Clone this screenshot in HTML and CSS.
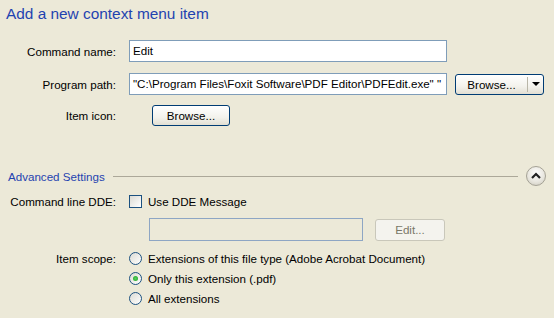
FILE: index.html
```html
<!DOCTYPE html>
<html lang="en">
<head>
  <meta charset="UTF-8">
  <title>Add a new context menu item</title>
  <link rel="stylesheet" href="styles.css">
</head>
<body>
  <h1 class="title">Add a new context menu item</h1>

  <div class="row row--name">
    <label class="label">Command name:</label>
    <div class="field field--wide">Edit</div>
  </div>

  <div class="row row--path">
    <label class="label">Program path:</label>
    <div class="field field--wide">"C:\Program Files\Foxit Software\PDF Editor\PDFEdit.exe" "</div>
    <button class="btn btn--split">
      <span class="btn__main">Browse...</span>
      <span class="btn__arrow"></span>
    </button>
  </div>

  <div class="row row--icon">
    <label class="label">Item icon:</label>
    <button class="btn btn--icon">Browse...</button>
  </div>

  <div class="section">
    <span class="section__title">Advanced Settings</span>
    <span class="section__line"></span>
    <span class="collapse">
      <svg width="10" height="8" viewBox="0 0 10 8"><path d="M1 6 L5 2 L9 6" fill="none" stroke="#222" stroke-width="2.2"/></svg>
    </span>
  </div>

  <div class="row row--dde">
    <label class="label">Command line DDE:</label>
    <span class="check"></span>
    <span class="opt">Use DDE Message</span>
  </div>

  <div class="row row--ddemsg">
    <div class="field field--off"></div>
    <button class="btn btn--off">Edit...</button>
  </div>

  <div class="row row--scope">
    <label class="label">Item scope:</label>
    <span class="radio"></span>
    <span class="opt">Extensions of this file type (Adobe Acrobat Document)</span>
  </div>
  <div class="row row--radio">
    <span class="radio radio--on"></span>
    <span class="opt">Only this extension (.pdf)</span>
  </div>
  <div class="row row--radio">
    <span class="radio"></span>
    <span class="opt">All extensions</span>
  </div>
</body>
</html>
```

FILE: styles.css
```css
* { padding:0; margin:0; box-sizing:border-box; }

:root {
  --color-bg: #ece9d8;
  --color-text: #000000;
  --color-blue: #1f43b0;
  --color-field: #7f9db9;
  --color-btn: #003c74;
  --label-width: 116px;
  --label-gap: 13px;
}

body {
  width: 554px;
  height: 318px;
  overflow: hidden;
  background-color: var(--color-bg);
  color: var(--color-text);
  font-family: "Liberation Sans", Arial, sans-serif;
  font-size: 11.6px;
}

.title {
  font-weight: normal;
  font-size: 15.4px;
  color: var(--color-blue);
  padding: 5px 0 0 6px;
  height: 40px;
}

.row {
  display: flex;
  align-items: center;
}

.label {
  width: var(--label-width);
  text-align: right;
  margin-right: var(--label-gap);
  flex: none;
}

.field {
  height: 22px;
  border: 1px solid var(--color-field);
  background-color: #ffffff;
  padding: 0 3px;
  line-height: 20px;
  white-space: nowrap;
  overflow: hidden;
}

.field--wide { width: 318px; }

.row--path { margin-top: 11px; }
.row--icon { margin-top: 10px; }

.btn {
  font-family: inherit;
  font-size: 11.6px;
  color: #000;
  border: 1px solid var(--color-btn);
  border-radius: 3px;
  background: linear-gradient(#ffffff, #f3f2ec 60%, #e2dfd3);
  height: 21px;
}

.btn--split {
  display: flex;
  align-items: center;
  width: 89px;
  margin-left: 8px;
}

.btn__main {
  flex: 1;
  text-align: center;
  border-right: 1px solid #b9b6a8;
  line-height: 15px;
}

.btn__arrow {
  width: 15px;
  display: flex;
  justify-content: center;
}

.btn__arrow::before {
  content: "";
  border-left: 4px solid transparent;
  border-right: 4px solid transparent;
  border-top: 4px solid #000;
}

.btn--icon {
  width: 78px;
  height: 21px;
  margin-left: 23px;
}

.section {
  display: flex;
  align-items: center;
  margin-top: 40px;
  padding-left: 8px;
  height: 20px;
}

.section__title {
  color: var(--color-blue);
}

.section__line {
  flex: 1;
  height: 1px;
  background-color: #aca899;
  margin: 0 8px 0 8px;
}

.collapse {
  width: 20px;
  height: 20px;
  border-radius: 50%;
  border: 1px solid #a5a296;
  background: radial-gradient(circle at 50% 35%, #ffffff, #e6e4dc 60%, #c8c5b8);
  display: flex;
  align-items: center;
  justify-content: center;
  margin-right: 8px;
}

.row--dde { margin-top: 5px; height: 20px; }

.check {
  width: 13px;
  height: 13px;
  border: 1px solid #1c5180;
  background: linear-gradient(135deg, #dcdbd4, #ffffff);
  flex: none;
}

.opt { margin-left: 6px; }

.row--ddemsg {
  margin-top: 7px;
  padding-left: 149px;
}

.field--off {
  width: 214px;
  height: 23px;
  background-color: transparent;
  border-color: #8ea6c4;
}

.btn--off {
  width: 70px;
  height: 22px;
  margin-left: 12px;
  border-color: #c9c7ba;
  background: #f4f3ee;
  color: #7a7768;
}

.row--scope { margin-top: 7px; height: 20px; }

.row--radio {
  height: 20px;
  padding-left: 129px;
}

.radio {
  width: 13px;
  height: 13px;
  border-radius: 50%;
  border: 1px solid #1c5180;
  background: linear-gradient(135deg, #dcdbd4, #ffffff);
  flex: none;
  display: flex;
  align-items: center;
  justify-content: center;
}

.radio--on::before {
  content: "";
  width: 5px;
  height: 5px;
  border-radius: 50%;
  background: radial-gradient(circle, #55d060, #21a121);
}
```
